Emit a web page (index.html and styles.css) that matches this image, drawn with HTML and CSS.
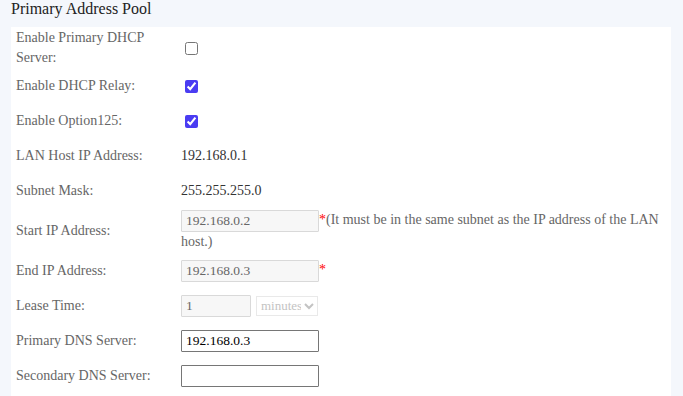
FILE: index.html
```
<!DOCTYPE html>
<html lang="en">
<head>
    <meta charset="UTF-8">
    <title>Primary Address Pool</title>
    <link rel="stylesheet" href="styles.css">
</head>
<body>
<div class="title">Primary Address Pool</div>
<div class="panel">
    <table class="form">
        <tr class="first">
            <td class="label">Enable Primary DHCP Server:</td>
            <td class="value"><input type="checkbox"></td>
        </tr>
        <tr>
            <td class="label">Enable DHCP Relay:</td>
            <td class="value"><input type="checkbox" checked></td>
        </tr>
        <tr>
            <td class="label">Enable Option125:</td>
            <td class="value"><input type="checkbox" checked></td>
        </tr>
        <tr>
            <td class="label">LAN Host IP Address:</td>
            <td class="value text">192.168.0.1</td>
        </tr>
        <tr>
            <td class="label">Subnet Mask:</td>
            <td class="value text">255.255.255.0</td>
        </tr>
        <tr class="tall">
            <td class="label">Start IP Address:</td>
            <td class="value"><input class="ip" type="text" value="192.168.0.2" disabled><span class="req">*</span>(It must be in the same subnet as the IP address of the LAN host.)</td>
        </tr>
        <tr>
            <td class="label">End IP Address:</td>
            <td class="value"><input class="ip" type="text" value="192.168.0.3" disabled><span class="req">*</span></td>
        </tr>
        <tr>
            <td class="label">Lease Time:</td>
            <td class="value"><input class="lease" type="text" value="1" disabled><select class="unit" disabled><option>minutes</option></select></td>
        </tr>
        <tr>
            <td class="label">Primary DNS Server:</td>
            <td class="value"><input class="ip" type="text" value="192.168.0.3"></td>
        </tr>
        <tr>
            <td class="label">Secondary DNS Server:</td>
            <td class="value"><input class="ip" type="text" value=""></td>
        </tr>
    </table>
</div>
</body>
</html>
```

FILE: styles.css
```
body{
    margin: 0;
    background: #f4f7fc;
    font-family: "Liberation Serif", serif;
    overflow: hidden;
}
.title{
    height: 27px;
    padding: 0 11px;
    font-size: 16px;
    line-height: 17px;
    color: #222;
}
.panel{
    margin: 0 12px 0 11px;
    background: #fff;
    padding: 0 5px;
    height: 369px;
}
.form{
    border-collapse: collapse;
    width: 100%;
}
.form td{
    padding: 0;
    height: 35px;
    font-size: 14px;
    line-height: 20px;
    vertical-align: middle;
}
.form tr.first td{
    height: 41px;
}
.form tr.tall td{
    height: 45px;
}
.label{
    width: 165px;
    color: #666;
}
.value{
    color: #666;
}
.value.text{
    color: #333;
}
.value input[type=checkbox]{
    accent-color: #4a3cf2;
    vertical-align: middle;
}
.ip, .lease{
    box-sizing: border-box;
    height: 22px;
    border: 1px solid #767676;
    border-radius: 1px;
    padding: 0 4px;
    font-family: "Liberation Serif", serif;
    font-size: 13.5px;
    color: #000;
    background: #fff;
    vertical-align: middle;
    margin: 0;
}
.ip{
    width: 138px;
}
.lease{
    width: 70px;
}
.ip:disabled, .lease:disabled{
    background: #f7f7f7;
    border-color: #d9d9d9;
    color: #666;
}
.unit{
    box-sizing: border-box;
    width: 62px;
    height: 20px;
    margin: 0 0 0 5px;
    font-family: "Liberation Serif", serif;
    font-size: 13px;
    color: #aaa;
    border: 1px solid #e0e0e0;
    background: #fff;
    vertical-align: middle;
}
.req{
    color: #f00;
}
```
